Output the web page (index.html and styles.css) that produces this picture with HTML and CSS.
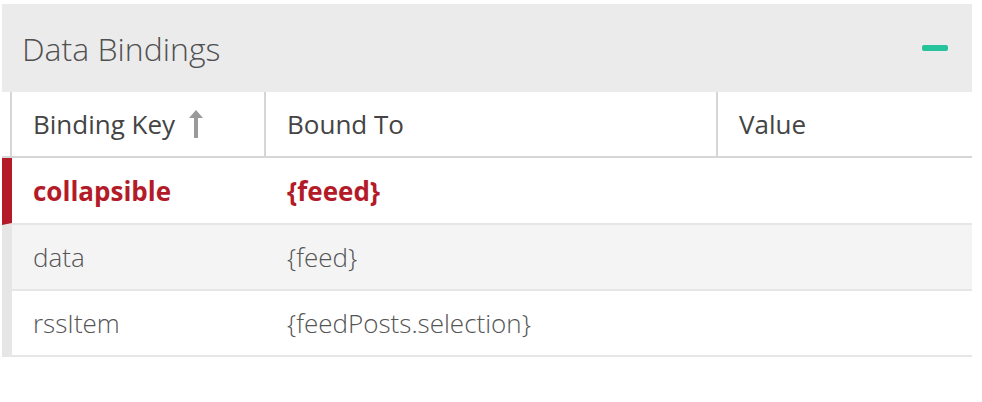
FILE: index.html
```html
<!DOCTYPE html>
<html lang="en">
<head>
    <meta charset="UTF-8">
    <meta name="viewport" content="width=device-width, initial-scale=1.0">
    <title>Data Bindings</title>
    <link rel="stylesheet" href="styles.css">
</head>
<body>
    <div class="panel">
        <div class="panel-header">
            <h2>Data Bindings</h2>
            <span class="collapse-btn" title="Collapse"></span>
        </div>

        <div class="bindings">
            <div class="row head">
                <div class="cell">Binding Key
                    <svg class="sort-icon" width="14" height="28" viewBox="0 0 14 28">
                        <path d="M7 0 L14 8 L9 8 L9 28 L5 28 L5 8 L0 8 Z" fill="#9a9a9a"/>
                    </svg>
                </div>
                <div class="cell">Bound To</div>
                <div class="cell">Value</div>
            </div>
            <div class="row error">
                <div class="cell">collapsible</div>
                <div class="cell">{feeed}</div>
                <div class="cell"></div>
            </div>
            <div class="row alt">
                <div class="cell">data</div>
                <div class="cell">{feed}</div>
                <div class="cell"></div>
            </div>
            <div class="row">
                <div class="cell">rssItem</div>
                <div class="cell">{feedPosts.selection}</div>
                <div class="cell"></div>
            </div>
        </div>
    </div>
</body>
</html>
```

FILE: styles.css
```css
body {
    margin: 4px 10px 0 2px;
    font-family: "Open Sans", "Liberation Sans", sans-serif;
    color: #444;
    background: #fff;
}
.panel-header {
    height: 88px;
    background: #ebebeb;
    display: flex;
    align-items: center;
    justify-content: space-between;
    padding: 0 24px 0 20px;
}
.panel-header h2 {
    margin: 0;
    font-size: 32px;
    font-weight: 300;
    color: #505050;
}
.collapse-btn {
    width: 26px;
    height: 6px;
    border-radius: 2px;
    background: #27c39d;
    cursor: pointer;
}
.row {
    display: grid;
    grid-template-columns: 254px 452px 1fr;
    height: 64px;
    border-left: 10px solid #e6e6e6;
    border-bottom: 2px solid #e6e6e6;
    font-size: 26px;
    font-weight: 300;
    color: #555;
}
.row .cell {
    display: flex;
    align-items: center;
    padding-left: 21px;
}
.row.head {
    border-left: 0;
    padding-left: 8px;
    border-bottom-color: #d6d6d6;
    font-weight: 400;
    color: #444;
}
.row.head .cell {
    border-left: 2px solid #d6d6d6;
}
.sort-icon {
    margin-left: 14px;
}
.row.error {
    height: 65px;
    border-left-color: #b31b28;
    font-weight: 700;
    color: #b31b28;
}
.row.alt {
    background: #f4f4f4;
}
```
